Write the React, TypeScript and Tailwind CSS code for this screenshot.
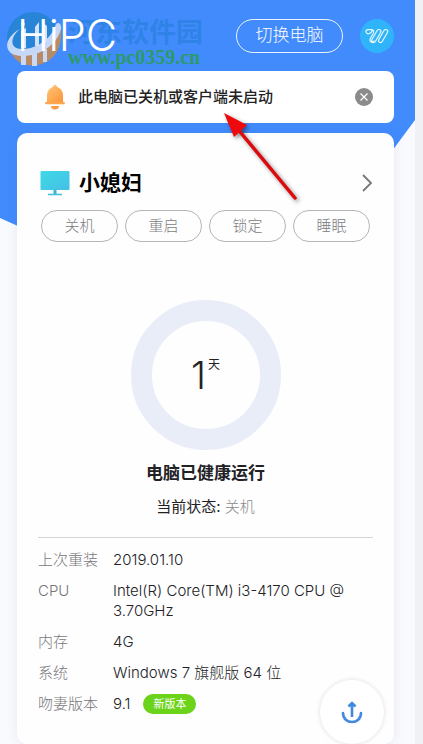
import type { ReactNode } from 'react';

const actions = ['关机', '重启', '锁定', '睡眠'];

const specs: { label: string; value: ReactNode }[] = [
  { label: '上次重装', value: '2019.01.10' },
  { label: 'CPU', value: 'Intel(R) Core(TM) i3-4170 CPU @ 3.70GHz' },
  { label: '内存', value: '4G' },
  { label: '系统', value: 'Windows 7 旗舰版 64 位' },
  {
    label: '吻妻版本',
    value: (
      <span className="flex items-center gap-[13px]">
        9.1
        <span className="rounded-full bg-[#6bd31a] px-[10px] text-[11px] font-normal leading-5 text-white">
          新版本
        </span>
      </span>
    ),
  },
];

function Backdrop() {
  return (
    <svg
      className="col-start-1 row-start-1 h-[333px] w-full"
      viewBox="0 0 415 333"
      preserveAspectRatio="none"
      aria-hidden="true"
    >
      <path d="M0 0H415V120L257 333L0 218Z" fill="#418bfd" />
    </svg>
  );
}

function Watermark() {
  return (
    <div className="pointer-events-none absolute left-1 top-[11px] flex select-none items-center gap-1">
      <svg className="h-14 w-[60px]" viewBox="0 0 60 56" aria-hidden="true">
        <circle cx="29" cy="27" r="26" fill="#2784d6" />
        <path d="M6 40Q30 44 57 17Q59 40 44 50Q32 57 19 53Q10 49 6 40Z" fill="#b88b68" />
        <path d="M17 42H22V54H17ZM28 42H33V55H28ZM39 38H43V51H39Z" fill="#c9d9f6" />
        <path
          d="M16 18C6 26 5 38 18 38C34 38 48 27 52 13C55 10 58 14 57 18C53 34 36 45 18 45C-1 45 -2 28 16 18Z"
          fill="#c6d8f8"
        />
        <path d="M17 20L22 17V37H17ZM31 16L35 11V35H31ZM38 11L43 15V30L38 34Z" fill="#d3e2fb" />
        <circle cx="19" cy="13" r="1.8" fill="#e3ecfc" />
      </svg>
      <div className="pt-1">
        <div className="font-[Noto_Sans_CJK_SC,sans-serif] text-[27px] font-bold leading-8 text-[#2f83e6]">
          河东软件园
        </div>
        <div className="font-[Liberation_Serif,serif] text-[20px] font-bold leading-5 text-[#2c9a68]">
          www.pc0359.cn
        </div>
      </div>
    </div>
  );
}

function Bell() {
  return (
    <svg className="h-[26px] w-[22px] shrink-0" viewBox="0 0 22 26" aria-hidden="true">
      <defs>
        <linearGradient id="bell" x1="0" y1="0" x2="1" y2="1">
          <stop offset="0" stopColor="#ffc374" />
          <stop offset="1" stopColor="#fd9338" />
        </linearGradient>
      </defs>
      <circle cx="11" cy="2.5" r="1.8" fill="#ffbe72" />
      <path d="M3 19V11a8 8.2 0 0 1 16 0V19Z" fill="url(#bell)" />
      <rect x="1" y="18" width="20" height="2.2" rx="1.1" fill="#fda650" />
      <path d="M7 22h8a4 3.4 0 0 1-8 0Z" fill="#fb9a48" />
    </svg>
  );
}

function Monitor() {
  return (
    <svg className="h-[26px] w-[30px] shrink-0" viewBox="0 0 30 26" aria-hidden="true">
      <defs>
        <linearGradient id="screen" x1="0" y1="0" x2="1" y2="1">
          <stop offset="0" stopColor="#3fd9e6" />
          <stop offset="1" stopColor="#45bfe6" />
        </linearGradient>
      </defs>
      <rect x="0.5" y="1" width="29" height="19" rx="1" fill="url(#screen)" />
      <path d="M13.5 20h3v4h-3Z" fill="#3fb3cf" />
      <path d="M8 24.5h14" stroke="#45c3dc" strokeWidth="1.6" />
    </svg>
  );
}

function BrandMark() {
  return (
    <svg
      className="h-[18px] w-[26px]"
      viewBox="0 0 28 20"
      fill="none"
      stroke="#e8f8ff"
      strokeWidth="1.3"
      strokeLinejoin="round"
      aria-hidden="true"
    >
      <path d="M9 3H4Q1 3 2 6Q3 8 5 7.5Q8 7 9 3Q11 4 10 7L7 12Q5 16 8 17Q10 17 11 15" />
      <rect x="11" y="2" width="4.4" height="16" rx="2.2" transform="rotate(30 13.2 10)" />
      <rect x="18.6" y="2" width="4.4" height="16" rx="2.2" transform="rotate(30 20.8 10)" />
    </svg>
  );
}

function Arrow() {
  return (
    <svg
      className="pointer-events-none absolute left-[220px] top-[108px] h-[96px] w-[84px] drop-shadow-[2px_2px_2px_rgba(0,0,0,0.45)]"
      viewBox="0 0 84 96"
      aria-hidden="true"
    >
      <path d="M75 90L16 19" stroke="#dc0b0e" strokeWidth="3.5" strokeLinecap="round" />
      <path d="M4 5L27 17L14 29Z" fill="#ee0a0c" />
    </svg>
  );
}

export default function App() {
  return (
    <div className="min-h-screen bg-[#f0f1f5] pr-2 font-[Inter,Noto_Sans_CJK_SC,sans-serif] text-[#222226]">
      <div className="relative grid grid-cols-1 bg-[#f9fafe]">
        <Backdrop />
        <Watermark />

        <main className="relative col-start-1 row-start-1 flex min-w-0 flex-col pl-[17px] pr-[21px]">
          <header className="flex h-[71px] items-center">
            <h1 className="flex-1 text-[43px] font-light leading-none text-white">HiPC</h1>
            <button className="h-[34px] w-[107px] rounded-full border border-white/90 text-[17px] font-light text-white">
              切换电脑
            </button>
            <button
              aria-label="账户"
              className="ml-[17px] grid size-[34px] place-items-center rounded-full bg-[#2fb4fa]"
            >
              <BrandMark />
            </button>
          </header>

          <section className="flex h-[52px] items-center rounded-lg bg-white pl-[27px] pr-[21px]">
            <Bell />
            <p className="ml-3 flex-1 text-[15px] font-medium text-[#222]">此电脑已关机或客户端未启动</p>
            <button aria-label="关闭" className="grid size-[18px] place-items-center rounded-full bg-[#8b8b8b]">
              <svg className="size-[10px]" viewBox="0 0 10 10" stroke="#fff" strokeWidth="1.2">
                <path d="M1.5 1.5L8.5 8.5M8.5 1.5L1.5 8.5" />
              </svg>
            </button>
          </section>

          <section className="mt-[10px] rounded-[10px] bg-[#fefefe] px-[21px] pb-[30px] pt-[34px] shadow-[0_0_12px_rgba(90,110,160,0.12)]">
            <div className="flex h-8 items-center pl-0.5">
              <Monitor />
              <h2 className="ml-[9px] flex-1 text-[21px] font-bold text-black">小媳妇</h2>
              <button aria-label="电脑详情" className="text-[#777]">
                <svg className="h-[18px] w-3" viewBox="0 0 12 18" fill="none" stroke="currentColor" strokeWidth="1.8">
                  <path d="M2 1L10 9L2 17" />
                </svg>
              </button>
            </div>

            <div className="mx-[3px] mt-[11px] flex gap-[7px]">
              {actions.map((name) => (
                <button
                  key={name}
                  className="h-8 flex-1 rounded-full border border-[#b5b5b8] text-[15px] font-light text-[#7c7c80]"
                >
                  {name}
                </button>
              ))}
            </div>

            <div className="mx-auto mt-[58px] flex size-[150px] items-center justify-center rounded-full border-[21px] border-[#e9edf8]">
              <p className="flex items-start gap-0.5">
                <span className="text-[38px] font-light leading-10">1</span>
                <span className="text-xs leading-5">天</span>
              </p>
            </div>

            <p className="mt-[11px] text-center text-[17px] font-bold leading-6">电脑已健康运行</p>
            <p className="mt-3 text-center text-[15px] leading-5">
              当前状态: <span className="font-light text-[#88888c]">关机</span>
            </p>

            <dl className="mt-5 grid grid-cols-[75px_1fr] gap-y-[11px] border-t border-[#d4d4d7] pt-3 text-[15px] font-light leading-5">
              {specs.map(({ label, value }) => (
                <div key={label} className="contents">
                  <dt className="text-[#77777b]">{label}</dt>
                  <dd>{value}</dd>
                </div>
              ))}
            </dl>
          </section>
        </main>

        <Arrow />
        <button
          aria-label="上传"
          className="absolute bottom-0 right-[31px] grid size-16 place-items-center rounded-full bg-white shadow-[0_0_4px_rgba(140,110,140,0.25)]"
        >
          <svg className="size-6" viewBox="0 0 24 24" fill="none" stroke="#4089e0" strokeWidth="2.6">
            <path d="M12 17V4M8.5 6.5L12 3L15.5 6.5" strokeLinejoin="round" />
            <path d="M3 13C3 25 21 25 21 13" strokeLinecap="round" />
          </svg>
        </button>
      </div>
    </div>
  );
}
